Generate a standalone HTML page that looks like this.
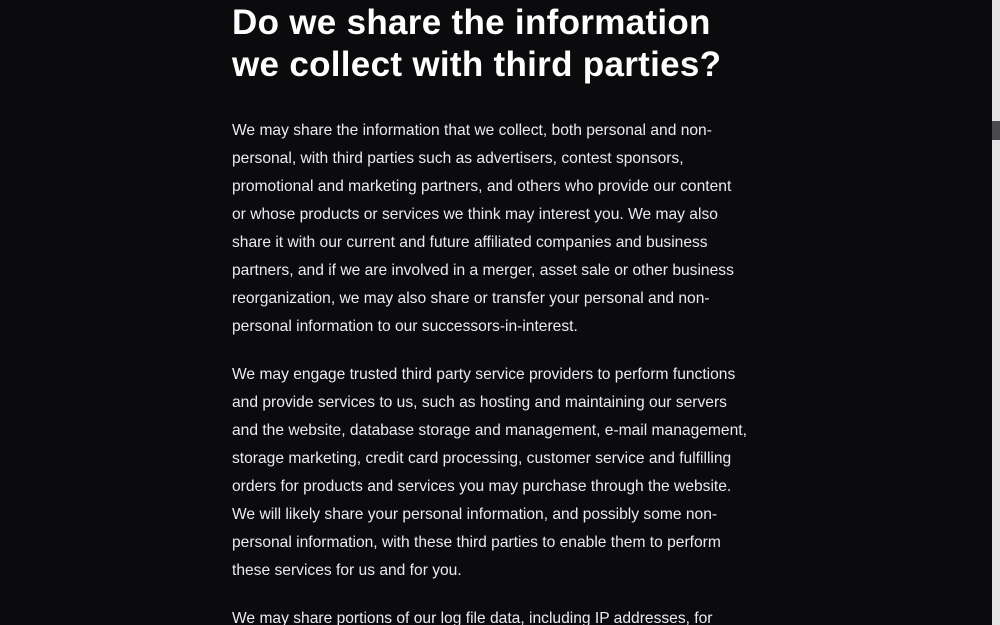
<!DOCTYPE html>
<html><head><meta charset="utf-8"><style>
html,body{margin:0;padding:0;width:1000px;height:625px;overflow:hidden;background:#0b0b0d;}
.sb{position:absolute;left:992px;top:0;width:8px;height:625px;background:#e4e4e4;}
.th{position:absolute;left:992px;top:121px;width:8px;height:19px;background:#4a4a4e;}
.c{position:absolute;left:232px;top:0;width:560px;height:625px;overflow:hidden;font-family:"Liberation Sans",sans-serif;color:#fff;}
h1{margin:0;position:absolute;top:2px;font-size:35px;line-height:42px;font-weight:bold;white-space:nowrap;letter-spacing:0.3px;}
p{margin:0;position:absolute;font-size:15.6px;line-height:28px;color:#ecebf0;white-space:nowrap;}
</style></head><body>
<div class="c">
<h1>Do we share the information<br>we collect with third parties?</h1>
<p style="top:117px">We may share the information that we collect, both personal and non-<br>personal, with third parties such as advertisers, contest sponsors,<br>promotional and marketing partners, and others who provide our content<br>or whose products or services we think may interest you. We may also<br>share it with our current and future affiliated companies and business<br>partners, and if we are involved in a merger, asset sale or other business<br>reorganization, we may also share or transfer your personal and non-<br>personal information to our successors-in-interest.</p>
<p style="top:361px">We may engage trusted third party service providers to perform functions<br>and provide services to us, such as hosting and maintaining our servers<br>and the website, database storage and management, e-mail management,<br>storage marketing, credit card processing, customer service and fulfilling<br>orders for products and services you may purchase through the website.<br>We will likely share your personal information, and possibly some non-<br>personal information, with these third parties to enable them to perform<br>these services for us and for you.</p>
<p style="top:605px">We may share portions of our log file data, including IP addresses, for</p>
</div>
<div class="sb"></div><div class="th"></div>
</body></html>
